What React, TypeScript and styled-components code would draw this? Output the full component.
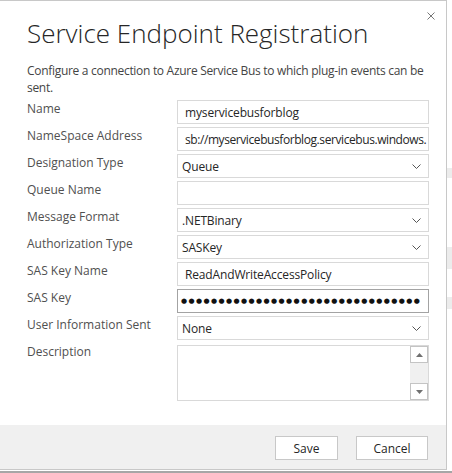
import React from "react";
import styled, { createGlobalStyle } from "styled-components";

const GlobalStyle = createGlobalStyle`
  html, body {
    margin: 0;
    padding: 0;
    background: #ffffff;
    font-family: "Segoe UI", "Open Sans", "Noto Sans", sans-serif;
  }
  * { box-sizing: border-box; }
`;

const Page = styled.div`
  display: flex;
  flex-direction: column;
  width: 452px;
  height: 473px;
  overflow: hidden;
`;

const Top = styled.div`
  display: flex;
  height: 470px;
`;

const Dialog = styled.div`
  position: relative;
  display: flex;
  flex-direction: column;
  width: 447px;
  height: 470px;
  border-top: 1px solid #c8c8c8;
  border-right: 1px solid #c8c8c8;
  border-bottom: 1px solid #c8c8c8;
  background: #ffffff;
`;

const Backdrop = styled.div`
  flex: 1;
  display: flex;
  flex-direction: column;
`;

const BackBit = styled.div<{ top: number; h: number }>`
  margin-top: ${(p) => p.top}px;
  height: ${(p) => p.h}px;
  background: #ececec;
`;

const BottomEdge = styled.div`
  margin-top: 1px;
  height: 2px;
  background: #a6a6a6;
`;

const Close = styled.button`
  position: absolute;
  top: 9px;
  right: 9px;
  width: 12px;
  height: 12px;
  padding: 0;
  border: none;
  background: none;
  display: flex;
  align-items: center;
  justify-content: center;
`;

const Body = styled.div`
  flex: 1;
  padding: 17px 17px 0 27px;
`;

const Title = styled.h1`
  margin: 0;
  font-family: "Segoe UI Light", "Open Sans", sans-serif;
  font-weight: 300;
  font-size: 26px;
  line-height: 30px;
  color: #262626;
`;

const Intro = styled.p`
  margin: 14px -10px 0 0;
  font-size: 12px;
  line-height: 17px;
  letter-spacing: -0.3px;
  white-space: nowrap;
  color: #444444;
`;

const Form = styled.div`
  display: grid;
  grid-template-columns: 150px 252px;
  grid-auto-rows: 24px;
  row-gap: 3px;
  margin-top: 4px;
`;

const Label = styled.label`
  font-size: 12px;
  line-height: 17px;
  color: #505050;
`;

const Field = styled.div<{ focused?: boolean; squeeze?: boolean }>`
  display: flex;
  align-items: center;
  height: 24px;
  padding: 0 ${(p) => (p.focused ? 3 : p.squeeze ? 2 : 7)}px 0 ${(p) => (p.focused ? 3 : 7)}px;
  border: 1px solid ${(p) => (p.focused ? "#a3a3a3" : "#d9d9d9")};
  font-size: 12px;
  letter-spacing: ${(p) => (p.squeeze ? -0.42 : -0.15)}px;
  color: #262626;
  white-space: nowrap;
  overflow: hidden;
`;

const Select = styled(Field)`
  justify-content: space-between;
  padding: 0 7px 0 4px;
`;

const Dots = styled.span`
  font-family: "DejaVu Sans", sans-serif;
  font-size: 7px;
  line-height: 10px;
  letter-spacing: 1.4px;
  color: #111;
`;

const Area = styled.div`
  display: flex;
  justify-content: flex-end;
  height: 56px;
  margin-top: 2px;
  border: 1px solid #d9d9d9;
`;

const Scrollbar = styled.div`
  display: flex;
  flex-direction: column;
  justify-content: space-between;
  width: 18px;
  background: #f0f0f0;
`;

const ScrollBtn = styled.div`
  width: 18px;
  height: 17px;
  border: 1px solid #c4c4c4;
  background: #ffffff;
  display: flex;
  align-items: center;
  justify-content: center;
`;

const Footer = styled.div`
  display: flex;
  justify-content: flex-end;
  gap: 18px;
  height: 44px;
  padding: 11px 18px 0 0;
  background: #f0f0f0;
`;

const Button = styled.button<{ w: number }>`
  width: ${(p) => p.w}px;
  height: 24px;
  border: 1px solid #c8c8c8;
  background: #ffffff;
  font-family: "Segoe UI", "Open Sans", sans-serif;
  font-size: 12px;
  color: #262626;
  padding: 0;
`;

const Chevron = () => (
  <svg width="9" height="5" viewBox="0 0 9 5">
    <polyline points="0.5,0.5 4.5,4.5 8.5,0.5" fill="none" stroke="#555" strokeWidth="1" />
  </svg>
);

const Arrow = ({ up }: { up?: boolean }) => (
  <svg width="7" height="4" viewBox="0 0 7 4">
    <polygon points={up ? "0,4 3.5,0 7,4" : "0,0 3.5,4 7,0"} fill="#707070" />
  </svg>
);

const rows: { label: string; value: string; kind: "text" | "select"; squeeze?: boolean }[] = [
  { label: "Name", value: "myservicebusforblog", kind: "text" },
  { label: "NameSpace Address", value: "sb://myservicebusforblog.servicebus.windows.", kind: "text", squeeze: true },
  { label: "Designation Type", value: "Queue", kind: "select" },
  { label: "Queue Name", value: "", kind: "text" },
  { label: "Message Format", value: ".NETBinary", kind: "select" },
  { label: "Authorization Type", value: "SASKey", kind: "select" },
  { label: "SAS Key Name", value: "ReadAndWriteAccessPolicy", kind: "text" },
];

export default function App() {
  return (
    <>
      <GlobalStyle />
      <Page>
        <Top>
          <Dialog>
            <Close aria-label="Close">
              <svg width="8" height="8" viewBox="0 0 8 8">
                <path d="M0.5 0.5 L7.5 7.5 M7.5 0.5 L0.5 7.5" stroke="#777" strokeWidth="1" />
              </svg>
            </Close>
            <Body>
              <Title>Service Endpoint Registration</Title>
              <Intro>
                Configure a connection to Azure Service Bus to which plug-in events can be
                <br />
                sent.
              </Intro>
              <Form>
                {rows.map((r) => (
                  <React.Fragment key={r.label}>
                    <Label>{r.label}</Label>
                    {r.kind === "select" ? (
                      <Select>
                        <span>{r.value}</span>
                        <Chevron />
                      </Select>
                    ) : (
                      <Field squeeze={r.squeeze}>{r.value}</Field>
                    )}
                  </React.Fragment>
                ))}
                <Label>SAS Key</Label>
                <Field focused>
                  <Dots>{"●".repeat(32)}</Dots>
                </Field>
                <Label>User Information Sent</Label>
                <Select>
                  <span>None</span>
                  <Chevron />
                </Select>
                <Label>Description</Label>
                <Area>
                  <Scrollbar>
                    <ScrollBtn>
                      <Arrow up />
                    </ScrollBtn>
                    <ScrollBtn>
                      <Arrow />
                    </ScrollBtn>
                  </Scrollbar>
                </Area>
              </Form>
            </Body>
            <Footer>
              <Button w={63}>Save</Button>
              <Button w={72}>Cancel</Button>
            </Footer>
          </Dialog>
          <Backdrop>
            <BackBit top={168} h={10} />
            <BackBit top={69} h={22} />
            <BackBit top={28} h={12} />
          </Backdrop>
        </Top>
        <BottomEdge />
      </Page>
    </>
  );
}
